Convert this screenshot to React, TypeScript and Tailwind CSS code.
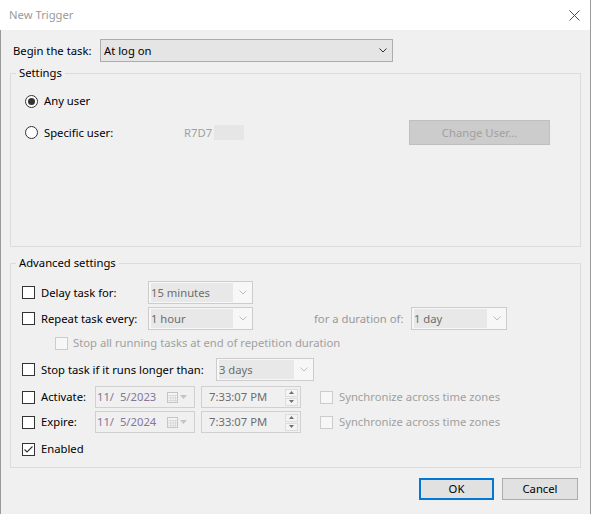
import React from 'react';

const font = "font-['Noto_Sans',_'Liberation_Sans',_sans-serif]";

const Chevron = ({ color }: { color: string }) => (
  <svg width="8" height="5" viewBox="0 0 8 5">
    <path d="M0.5 0.5 L4 4 L7.5 0.5" fill="none" stroke={color} strokeWidth="1" />
  </svg>
);

const Check = ({ disabled, checked }: { disabled?: boolean; checked?: boolean }) => (
  <div
    className={
      disabled
        ? 'flex h-[13px] w-[13px] shrink-0 items-center justify-center border border-[#cccccc] bg-[#f7f7f7]'
        : 'flex h-[13px] w-[13px] shrink-0 items-center justify-center border border-[#333333] bg-white'
    }
  >
    {checked && (
      <svg width="11" height="11" viewBox="0 0 11 11">
        <path d="M1.5 5.5 L4 8 L9.5 2.5" fill="none" stroke="#333" strokeWidth="1.1" />
      </svg>
    )}
  </div>
);

const Radio = ({ selected }: { selected?: boolean }) => (
  <div className="flex h-[13px] w-[13px] shrink-0 items-center justify-center rounded-full border border-[#333333] bg-white">
    {selected && <div className="h-[7px] w-[7px] rounded-full bg-[#333333]" />}
  </div>
);

// disabled combo box, as the Task Scheduler draws it
const Combo = ({ value, className }: { value: string; className: string }) => (
  <div className={`flex h-[23px] shrink-0 items-stretch border border-[#cccccc] bg-[#f7f7f7] py-[1px] pl-[2px] ${className}`}>
    <div className="flex flex-1 items-center bg-[#e8e8e8] text-[#6d6d6d]">{value}</div>
    <div className="flex w-[19px] items-center justify-center">
      <Chevron color="#bcbcbc" />
    </div>
  </div>
);

const Calendar = () => (
  <svg width="11" height="11" viewBox="0 0 11 11">
    <rect x="0.5" y="0.5" width="10" height="10" fill="#f4f4f4" stroke="#c4c4c4" />
    <path d="M0.5 3.5 H10.5 M0.5 6 H10.5 M0.5 8.5 H10.5 M3.5 3.5 V10.5 M6 3.5 V10.5 M8.5 3.5 V10.5" stroke="#d6d6d6" strokeWidth="0.8" />
  </svg>
);

const DateBox = ({ value }: { value: string }) => (
  <div className="flex h-[22px] w-[100px] shrink-0 items-center border border-[#d0d0d0] bg-[#f0f0f0] pl-[1px]">
    <span className="flex-1 whitespace-pre text-[#857799]">{value}</span>
    <div className="mr-[7px] flex items-center gap-[2px]">
      <Calendar />
      <svg width="7" height="4" viewBox="0 0 7 4">
        <path d="M0 0 H7 L3.5 4 Z" fill="#c4c4c4" />
      </svg>
    </div>
  </div>
);

const TimeBox = ({ value }: { value: string }) => (
  <div className="flex h-[22px] w-[100px] shrink-0 items-center border border-[#d0d0d0] bg-[#f0f0f0] pl-[7px] pr-[2px]">
    <span className="flex-1 text-[#6d6d6d]">{value}</span>
    <div className="flex flex-col gap-[1px]">
      <div className="flex h-[8px] w-[13px] items-center justify-center border border-[#dcdcdc] bg-[#f4f4f4]">
        <svg width="5" height="3" viewBox="0 0 5 3">
          <path d="M0 3 H5 L2.5 0 Z" fill="#707070" />
        </svg>
      </div>
      <div className="flex h-[8px] w-[13px] items-center justify-center border border-[#dcdcdc] bg-[#f4f4f4]">
        <svg width="5" height="3" viewBox="0 0 5 3">
          <path d="M0 0 H5 L2.5 3 Z" fill="#707070" />
        </svg>
      </div>
    </div>
  </div>
);

export default function App() {
  return (
    <div className={`flex h-[514px] w-[591px] flex-col text-[11.25px] leading-[16px] text-black ${font}`}>
      {/* title bar */}
      <div className="flex h-[30px] shrink-0 items-center justify-between border-r border-[#9a9a9a] bg-white pl-[9px] pr-[10px]">
        <span className="text-[#9a9a9a]">New Trigger</span>
        <svg width="11" height="11" viewBox="0 0 11 11">
          <path d="M0.5 0.5 L10.5 10.5 M10.5 0.5 L0.5 10.5" stroke="#4a4a4a" strokeWidth="1" />
        </svg>
      </div>

      <div className="flex flex-1 flex-col border-x border-[#9a9a9a] bg-[#f0f0f0]">
        {/* begin the task */}
        <div className="mt-[9px] flex items-center">
          <span className="ml-[12px] w-[87px]">Begin the task:</span>
          <div className="flex h-[23px] w-[293px] items-center justify-between border border-[#adadad] bg-[#e5e5e5] pl-[3px] pr-[5px]">
            <span>At log on</span>
            <Chevron color="#333333" />
          </div>
        </div>

        {/* settings */}
        <fieldset className="ml-[9px] mt-[3px] h-[182px] w-[571px] border border-[#dcdcdc] p-0">
          <legend className="ml-[5px] px-[3px] leading-[16px]">Settings</legend>
          <div className="flex flex-col pl-[14px] pr-[30px]">
            <div className="mt-[12px] flex h-[16px] items-center">
              <Radio selected />
              <span className="ml-[6px]">Any user</span>
            </div>
            <div className="mt-[11px] flex h-[25px] items-center">
              <Radio />
              <span className="ml-[6px] w-[140px]">Specific user:</span>
              <span className="text-[#a0a0a0]">R7D7</span>
              <span className="ml-[2px] h-[15px] w-[30px] bg-[#e6e6e6]" />
              <button className="ml-auto h-[25px] w-[141px] border border-[#bfbfbf] bg-[#cccccc] text-[#a0a0a0]">
                Change User...
              </button>
            </div>
          </div>
        </fieldset>

        {/* advanced settings */}
        <fieldset className="ml-[9px] mt-[8px] h-[213px] w-[571px] border border-[#dcdcdc] p-0">
          <legend className="ml-[5px] px-[3px] leading-[16px]">Advanced settings</legend>
          <div className="flex flex-col pl-[11px]">
            <div className="mt-[10px] flex items-center">
              <div className="flex w-[126px] items-center">
                <Check />
                <span className="ml-[6px]">Delay task for:</span>
              </div>
              <Combo value="15 minutes" className="w-[105px]" />
            </div>

            <div className="mt-[3px] flex items-center">
              <div className="flex w-[126px] items-center">
                <Check />
                <span className="ml-[6px]">Repeat task every:</span>
              </div>
              <Combo value="1 hour" className="w-[105px]" />
              <span className="ml-[61px] w-[97px] text-[#999999]">for a duration of:</span>
              <Combo value="1 day" className="w-[96px]" />
            </div>

            <div className="mt-[5px] flex h-[16px] items-center pl-[33px]">
              <Check disabled />
              <span className="ml-[5px] text-[#a0a0a0]">Stop all running tasks at end of repetition duration</span>
            </div>

            <div className="mt-[7px] flex items-center">
              <div className="flex w-[194px] items-center">
                <Check />
                <span className="ml-[6px]">Stop task if it runs longer than:</span>
              </div>
              <Combo value="3 days" className="w-[98px]" />
            </div>

            <div className="mt-[5px] flex items-center">
              <div className="flex w-[73px] items-center">
                <Check />
                <span className="ml-[6px]">Activate:</span>
              </div>
              <DateBox value="11/  5/2023" />
              <div className="ml-[6px]">
                <TimeBox value="7:33:07 PM" />
              </div>
              <div className="ml-[19px] flex items-center">
                <Check disabled />
                <span className="ml-[6px] text-[#a0a0a0]">Synchronize across time zones</span>
              </div>
            </div>

            <div className="mt-[3px] flex items-center">
              <div className="flex w-[73px] items-center">
                <Check />
                <span className="ml-[6px]">Expire:</span>
              </div>
              <DateBox value="11/  5/2024" />
              <div className="ml-[6px]">
                <TimeBox value="7:33:07 PM" />
              </div>
              <div className="ml-[19px] flex items-center">
                <Check disabled />
                <span className="ml-[6px] text-[#a0a0a0]">Synchronize across time zones</span>
              </div>
            </div>

            <div className="mt-[8px] flex h-[16px] items-center">
              <Check checked />
              <span className="ml-[6px]">Enabled</span>
            </div>
          </div>
        </fieldset>

        {/* buttons */}
        <div className="mt-[10px] flex justify-end gap-[8px] pr-[12px]">
          <button className="h-[22px] w-[75px] border-2 border-[#0078d7] bg-[#e1e1e1]">OK</button>
          <button className="h-[22px] w-[76px] border border-[#adadad] bg-[#e1e1e1]">Cancel</button>
        </div>
      </div>
    </div>
  );
}
